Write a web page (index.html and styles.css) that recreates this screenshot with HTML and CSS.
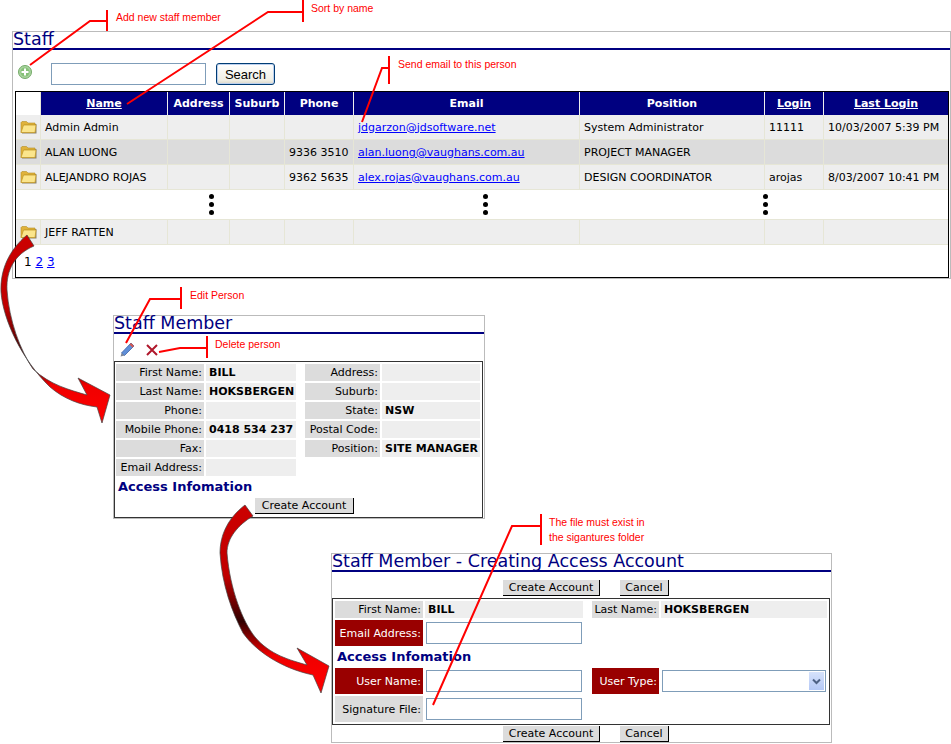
FILE: index.html
```html
<!DOCTYPE html>
<html>

<head>
    <meta charset="utf-8" />
    <title>Staff</title>
    <link rel="stylesheet" href="styles.css">
</head>

<body>
    <div class="panel staff">
        <div class="title">Staff</div>
        <div class="search-bar">
            <svg class="add-icon" width="14" height="14" viewBox="0 0 14 14">
                <circle cx="7" cy="7" r="6.5" fill="#a8d49e" stroke="#74a968" />
                <circle cx="7" cy="7" r="4.5" fill="#86c078" />
                <path d="M6 3.5h2V6h2.500v2H8v2.500H6V8H3.500V6H6z" fill="#fff" />
            </svg>
            <input class="text-input search-input" type="text" />
            <button class="search-btn">Search</button>
        </div>
        <div class="box">
            <table class="list">
                <colgroup>
                    <col class="c-icon"><col class="c-name"><col class="c-addr"><col class="c-sub"><col class="c-phone"><col class="c-mail"><col class="c-pos"><col class="c-login"><col class="c-last">
                </colgroup>
                <tr class="head">
                    <th class="blank"></th>
                    <th><a href="#">Name</a></th>
                    <th>Address</th>
                    <th>Suburb</th>
                    <th>Phone</th>
                    <th>Email</th>
                    <th>Position</th>
                    <th><a href="#">Login</a></th>
                    <th><a href="#">Last Login</a></th>
                </tr>
                <tr class="odd">
                    <td><svg class="folder" viewBox="0 0 17 14"><use href="#folder" /></svg></td>
                    <td>Admin Admin</td><td></td><td></td><td></td>
                    <td><a href="#">jdgarzon@jdsoftware.net</a></td>
                    <td>System Administrator</td><td>11111</td><td>10/03/2007 5:39 PM</td>
                </tr>
                <tr class="even">
                    <td><svg class="folder" viewBox="0 0 17 14"><use href="#folder" /></svg></td>
                    <td>ALAN LUONG</td><td></td><td></td><td>9336 3510</td>
                    <td><a href="#">alan.luong@vaughans.com.au</a></td>
                    <td>PROJECT MANAGER</td><td></td><td></td>
                </tr>
                <tr class="odd">
                    <td><svg class="folder" viewBox="0 0 17 14"><use href="#folder" /></svg></td>
                    <td>ALEJANDRO ROJAS</td><td></td><td></td><td>9362 5635</td>
                    <td><a href="#">alex.rojas@vaughans.com.au</a></td>
                    <td>DESIGN COORDINATOR</td><td>arojas</td><td>8/03/2007 10:41 PM</td>
                </tr>
                <tr class="gap">
                    <td colspan="9">
                        <div class="gap-dots">
                            <span class="dots"><i></i><i></i><i></i></span>
                            <span class="dots"><i></i><i></i><i></i></span>
                            <span class="dots"><i></i><i></i><i></i></span>
                        </div>
                    </td>
                </tr>
                <tr class="odd">
                    <td><svg class="folder" viewBox="0 0 17 14"><use href="#folder" /></svg></td>
                    <td>JEFF RATTEN</td><td></td><td></td><td></td><td></td><td></td><td></td><td></td>
                </tr>
            </table>
            <div class="pager">1 <a href="#">2</a> <a href="#">3</a></div>
        </div>
    </div>

    <div class="panel member">
        <div class="title">Staff Member</div>
        <div class="member-bar">
            <svg class="edit-icon" width="15" height="15" viewBox="0 0 15 15">
                <path d="M11 1l3 3L4.500 13.500 1.500 11z" fill="#5f8fd8" stroke="#3d62a8" stroke-width=".8" />
                <path d="M11 1l3 3-1.500 1.500-3-3z" fill="#d8584f" />
                <path d="M1.500 11l3 2.500L.6 14.500z" fill="#7d8798" />
            </svg>
            <svg class="del-icon" width="12" height="12" viewBox="0 0 12 12">
                <path d="M1 1l10 10M11 1L1 11" stroke="#b0182c" stroke-width="2" fill="none" />
            </svg>
        </div>
        <div class="box member-box">
            <div class="field-cols">
                <div class="field-col left-col">
                    <span class="lbl">First Name:</span><span class="val">BILL</span>
                    <span class="lbl">Last Name:</span><span class="val">HOKSBERGEN</span>
                    <span class="lbl">Phone:</span><span class="val"></span>
                    <span class="lbl">Mobile Phone:</span><span class="val">0418 534 237</span>
                    <span class="lbl">Fax:</span><span class="val"></span>
                    <span class="lbl">Email Address:</span><span class="val"></span>
                </div>
                <div class="field-col right-col">
                    <span class="lbl">Address:</span><span class="val"></span>
                    <span class="lbl">Suburb:</span><span class="val"></span>
                    <span class="lbl">State:</span><span class="val">NSW</span>
                    <span class="lbl">Postal Code:</span><span class="val"></span>
                    <span class="lbl">Position:</span><span class="val">SITE MANAGER</span>
                </div>
            </div>
            <div class="access">Access Infomation</div>
            <button class="flat-btn member-create">Create Account</button>
        </div>
    </div>

    <div class="panel account">
        <div class="title">Staff Member - Creating Access Account</div>
        <div class="btn-row top-row">
            <button class="flat-btn btn-create">Create Account</button>
            <button class="flat-btn btn-cancel">Cancel</button>
        </div>
        <div class="box account-box">
            <span class="lbl">First Name:</span><span class="val val-wide">BILL</span><span></span>
            <span class="lbl">Last Name:</span><span class="val val-wide">HOKSBERGEN</span>

            <span class="lbl req">Email Address:</span>
            <span class="cell"><input class="text-input cell-input" type="text" /></span>
            <span class="fill-3"></span>

            <div class="access access-row">Access Infomation</div>

            <span class="lbl req">User Name:</span>
            <span class="cell"><input class="text-input cell-input" type="text" /></span><span></span>
            <span class="lbl req">User Type:</span>
            <span class="cell">
                <span class="fake-select">
                    <span class="select-arrow">
                        <svg width="9" height="7" viewBox="0 0 9 7"><path d="M1 1.500l3.500 3.500L8 1.500" fill="none" stroke="#4d6185" stroke-width="2" /></svg>
                    </span>
                </span>
            </span>

            <span class="lbl">Signature File:</span>
            <span class="cell"><input class="text-input cell-input" type="text" /></span>
            <span class="fill-3"></span>
        </div>
        <div class="btn-row bottom-row">
            <button class="flat-btn btn-create">Create Account</button>
            <button class="flat-btn btn-cancel">Cancel</button>
        </div>
    </div>

    <!-- red notes and curved arrows drawn over the screens -->
    <svg class="notes" width="951" height="744" viewBox="0 0 951 744">
        <defs>
            <linearGradient id="arrow1" x1="0" y1="235" x2="0" y2="423" gradientUnits="userSpaceOnUse">
                <stop offset="0" stop-color="#cc0000" />
                <stop offset=".38" stop-color="#c00000" />
                <stop offset=".66" stop-color="#300000" />
                <stop offset=".8" stop-color="#f00000" />
                <stop offset="1" stop-color="#ff0000" />
            </linearGradient>
            <linearGradient id="arrow2" x1="0" y1="505" x2="0" y2="693" gradientUnits="userSpaceOnUse">
                <stop offset="0" stop-color="#cc0000" />
                <stop offset=".38" stop-color="#c00000" />
                <stop offset=".62" stop-color="#300000" />
                <stop offset=".8" stop-color="#f00000" />
                <stop offset="1" stop-color="#ff0000" />
            </linearGradient>
            <symbol id="folder" viewBox="0 0 17 14">
                <path d="M2 13.500h14.500V4H8L6.500 2H2L1 3z" fill="#8d8468" />
                <path d="M1 12.500V2.500L2 1.500h4.500L8 3h7v2H4L1.500 12.500z" fill="#e0b23c" stroke="#b58e24" stroke-width=".6" />
                <path d="M1 12.500L3.500 5H16l-1 7.500z" fill="#fbe58c" stroke="#c89c2a" stroke-width=".8" />
            </symbol>
        </defs>

        <path class="big-arrow" fill="url(#arrow1)" d="M27 235C9 250 0 270 1 292C3 320 22 360 50 387C64 399 80 405 97 407L102 423L110 395L78 378L87 395C70 390 50 385 33 369C20 350 9 320 7 290C6 270 15 254 34 246Z" />
        <path class="big-arrow" fill="url(#arrow2)" d="M245 505C228 518 220 535 220 553C222 585 232 612 243 633C255 650 280 668 313 675L321 693L329 666L297 648L307 665C290 660 270 655 255 637C243 622 230 590 227 553C227 538 238 525 253 516Z" />

        <path class="lead" d="M30 65L90 21H107M107 10V31" />
        <path class="lead" d="M127 104L268 12H303M303 0V22" />
        <path class="lead" d="M362 122L382 68H389M389 56V84" />
        <path class="lead" d="M126 343L150 299H181M181 287V309" />
        <path class="lead" d="M159 352L180 348H207M207 336V358" />
        <path class="lead" d="M433 705L512 526H541M541 514V545" />

        <text class="note" x="116" y="21">Add new staff member</text>
        <text class="note" x="311" y="12">Sort by name</text>
        <text class="note" x="398" y="68">Send email to this person</text>
        <text class="note" x="190" y="299">Edit Person</text>
        <text class="note" x="215" y="348">Delete person</text>
        <text class="note" x="549" y="526">The file must exist in</text>
        <text class="note" x="549" y="541">the sigantures folder</text>
    </svg>
</body>

</html>
```

FILE: styles.css
```css
html,
body {
    margin: 0;
    padding: 0;
    background-color: #fff;
}

body {
    position: relative;
    width: 951px;
    height: 744px;
    overflow: hidden;
    font-family: "DejaVu Sans", Verdana, sans-serif;
    font-size: 11px;
    color: #000;
}

a {
    color: #00f;
}

.panel {
    box-sizing: border-box;
    border: 1px solid #bbb;
}

.title {
    height: 16px;
    line-height: 15px;
    border-bottom: 2px solid #000080;
    color: #000080;
    font-size: 17.5px;
    white-space: nowrap;
}

.box {
    box-sizing: border-box;
    border: 1px solid #333;
}

/* staff list */
.staff {
    width: 939px;
    margin: 31px 0 0 12px;
}

.search-bar {
    display: flex;
    height: 41px;
    box-sizing: border-box;
    padding: 13px 0 0 5px;
    align-items: flex-start;
}

.add-icon {
    margin-top: 2px;
}

.text-input {
    box-sizing: border-box;
    height: 22px;
    margin: 0;
    padding: 0;
    border: 1px solid #7f9db9;
    background-color: #fff;
}

.search-input {
    width: 155px;
    margin-left: 19px;
}

.search-btn {
    width: 59px;
    height: 22px;
    margin-left: 10px;
    padding: 0;
    border: 1px solid #003c74;
    border-radius: 3px;
    background: linear-gradient(#fff, #f0efe6 80%, #dcd8c8);
    box-shadow: inset 0 0 0 1px #bcd0ee;
    font-family: "Liberation Sans", Arial, sans-serif;
    font-size: 13px;
    color: #000;
}

.staff .box {
    width: 934px;
    margin-left: 2px;
    border-color: #000;
}

.list {
    width: 932px;
    table-layout: fixed;
    border-collapse: separate;
    border-spacing: 0;
}

.c-icon { width: 25px; }
.c-name { width: 127px; }
.c-addr { width: 62px; }
.c-sub { width: 55px; }
.c-phone { width: 69px; }
.c-mail { width: 226px; }
.c-pos { width: 185px; }
.c-login { width: 59px; }
.c-last { width: 124px; }

.head th {
    height: 23px;
    padding: 0;
    border-right: 1px solid #eee;
    background-color: #000080;
    color: #fff;
    font-size: 11px;
    text-align: center;
    white-space: nowrap;
}

.head th:last-child {
    border-right: 0;
}

.head th.blank {
    background-color: #fff;
    border-right: 1px solid #e8e8d8;
}

.head a {
    color: #fff;
}

.list td {
    height: 24px;
    padding: 0 0 0 4px;
    border-right: 1px solid #e6e6d6;
    border-bottom: 1px solid #e6e6d6;
    white-space: nowrap;
    overflow: hidden;
}

.list td:first-child {
    padding: 0 0 0 4px;
}

.list td:last-child {
    border-right: 0;
}

.odd td {
    background-color: #eee;
}

.even td {
    background-color: #dcdcdc;
}

.list .gap td {
    height: 29px;
    padding: 0;
    background-color: #fff;
    border-right: 0;
}

.gap-dots {
    display: flex;
    padding-left: 193px;
    gap: 268px;
}

.dots {
    display: flex;
    flex-direction: column;
    gap: 3px;
    width: 6px;
}

.dots:last-child {
    margin-left: 6px;
}

.dots i {
    display: block;
    width: 5px;
    height: 5px;
    border-radius: 50%;
    background-color: #000;
}

.folder {
    display: block;
    width: 17px;
    height: 14px;
}

.pager {
    height: 32px;
    line-height: 34px;
    padding-left: 8px;
    font-size: 12px;
}

/* staff member */
.member {
    width: 372px;
    margin: 36px 0 0 113px;
}

.member-bar {
    display: flex;
    height: 27px;
    box-sizing: border-box;
    padding: 8px 0 0 6px;
    align-items: flex-start;
}

.del-icon {
    margin: 2px 0 0 11px;
}

.member-box {
    width: 369px;
    padding: 2px 1px 3px;
}

.field-cols {
    display: flex;
    gap: 9px;
}

.field-col {
    display: grid;
    grid-auto-rows: 17px;
    row-gap: 2px;
    column-gap: 2px;
    align-content: start;
}

.left-col {
    grid-template-columns: 88px 90px;
}

.right-col {
    grid-template-columns: 75px 98px;
}

.lbl {
    padding-right: 2px;
    background-color: #dcdcdc;
    line-height: 17px;
    text-align: right;
    white-space: nowrap;
}

.val {
    padding-left: 3px;
    background-color: #eee;
    font-weight: bold;
    line-height: 17px;
    white-space: nowrap;
}

.access {
    height: 18px;
    line-height: 18px;
    margin-top: 2px;
    padding-left: 2px;
    color: #000080;
    font-size: 13px;
    font-weight: bold;
}

.flat-btn {
    display: block;
    box-sizing: border-box;
    height: 16px;
    margin: 0;
    padding: 0;
    border: 0;
    border-right: 1px solid #000;
    border-bottom: 1px solid #000;
    background-color: #dcdcdc;
    font-family: "DejaVu Sans", Verdana, sans-serif;
    font-size: 11px;
    line-height: 14px;
    color: #000;
}

.member-create {
    width: 99px;
    margin: 2px 0 0 139px;
}

/* creating access account */
.account {
    width: 501px;
    margin: 34px 0 0 331px;
}

.btn-row {
    display: flex;
    box-sizing: border-box;
    padding-left: 171px;
    gap: 20px;
}

.top-row {
    height: 26px;
    padding-top: 8px;
}

.bottom-row {
    height: 17px;
    padding-top: 1px;
}

.btn-create {
    width: 97px;
}

.btn-cancel {
    width: 49px;
}

.account-box {
    display: grid;
    width: 498px;
    padding: 2px;
    grid-template-columns: 88px 160px 9px 67px 168px;
    grid-template-rows: 17px 26px 18px 26px 26px;
    row-gap: 2px;
}

.account-box .lbl {
    line-height: normal;
    display: flex;
    align-items: center;
    justify-content: flex-end;
}

.val-wide {
    margin-left: 2px;
}

.req {
    color: #fff;
}

.account-box .req {
    background-color: #990000;
}

.cell {
    display: flex;
    align-items: center;
    padding-left: 3px;
}

.cell-input {
    width: 156px;
}

.fill-3 {
    grid-column: span 3;
}

.access-row {
    grid-column: 1 / -1;
    margin-top: 0;
}

.fake-select {
    display: flex;
    box-sizing: border-box;
    width: 164px;
    height: 22px;
    border: 1px solid #7f9db9;
    background-color: #fff;
    justify-content: flex-end;
    padding: 1px;
}

.select-arrow {
    display: flex;
    width: 15px;
    align-items: center;
    justify-content: center;
    background: linear-gradient(#d6e2fb, #b4c8f6);
}

/* overlay */
.notes {
    position: absolute;
    top: 0;
    left: 0;
    pointer-events: none;
}

.lead {
    fill: none;
    stroke: #ff0000;
    stroke-width: 2;
}

.note {
    fill: #ff0000;
    font-family: "Liberation Sans", Arial, sans-serif;
    font-size: 10.500px;
}

.big-arrow {
    stroke: #444;
    stroke-width: .7;
}
```
